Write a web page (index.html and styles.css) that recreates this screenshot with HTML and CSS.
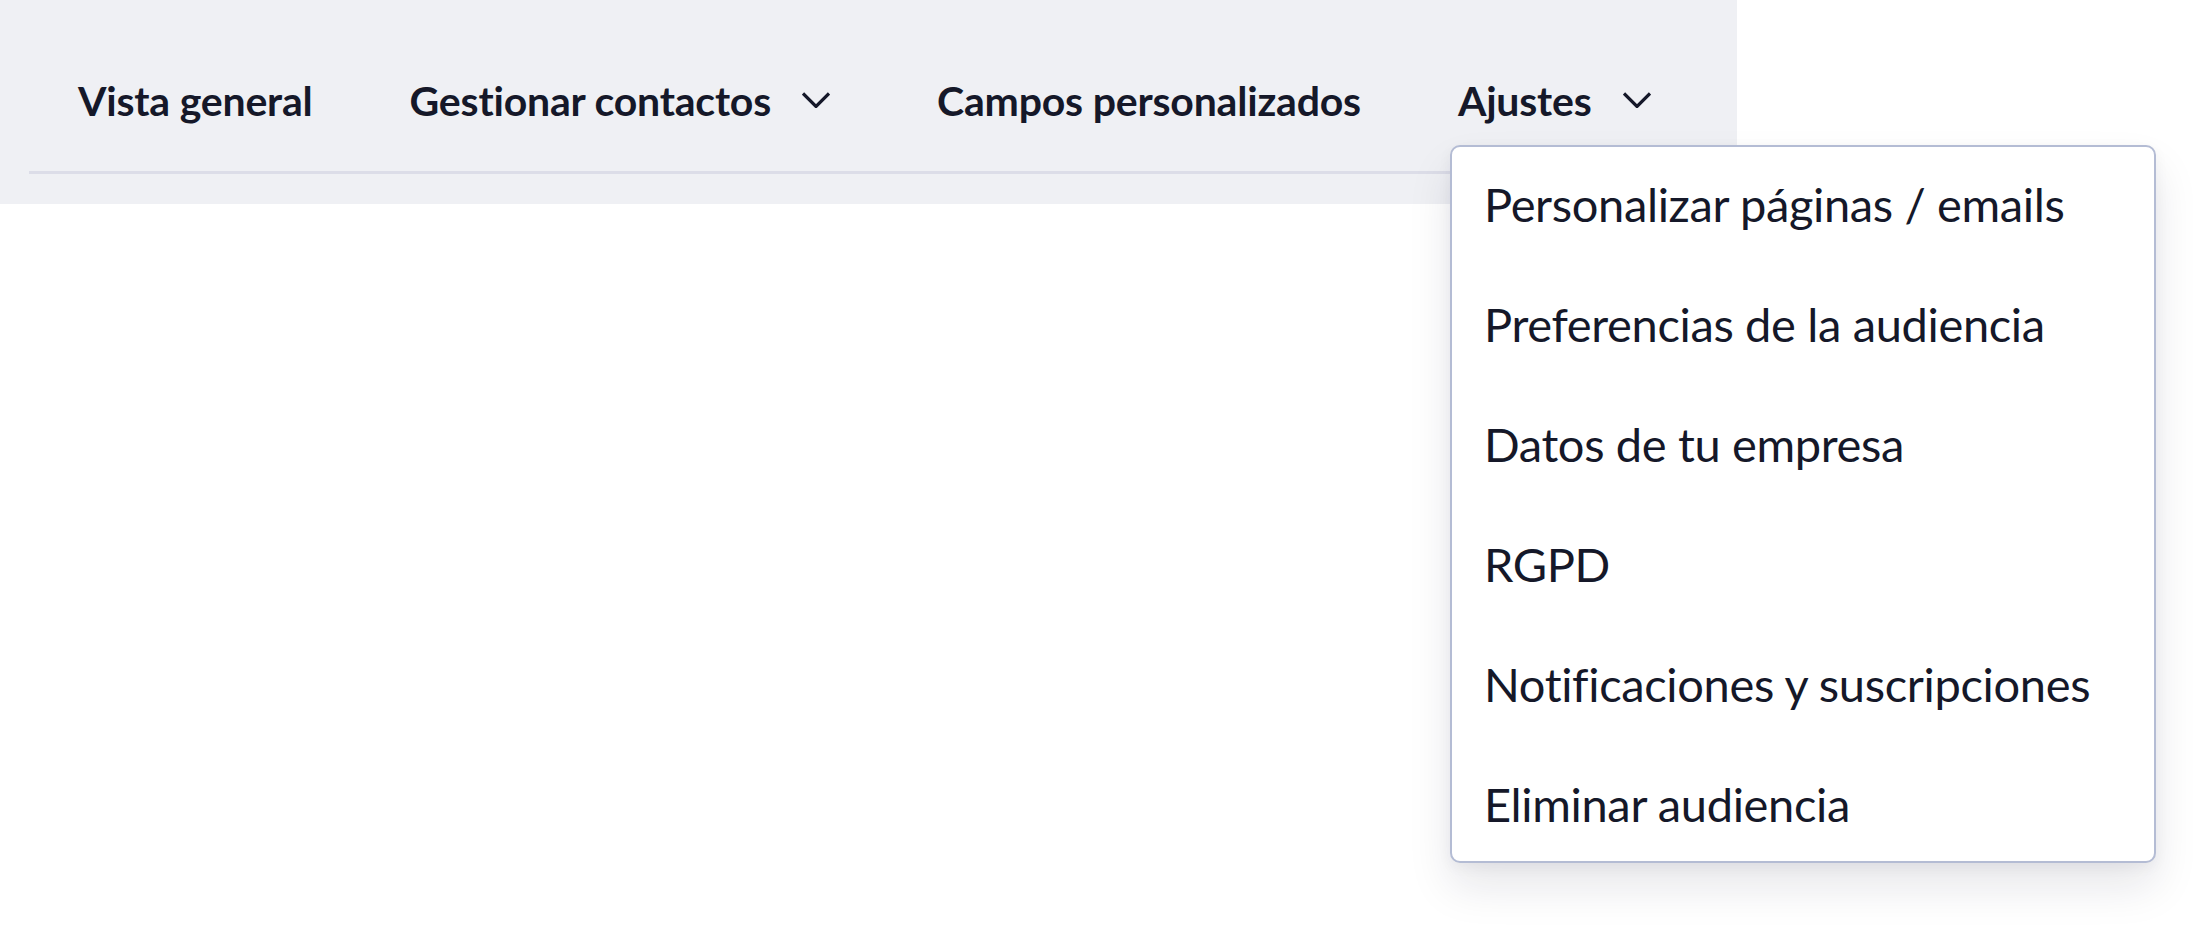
FILE: index.html
```html
<!DOCTYPE html>
<html lang="es">
<head>
<meta charset="utf-8">
<title>Audiencia</title>
<link rel="stylesheet" href="styles.css">
</head>
<body>
<div class="page">
  <header class="topbar">
    <nav class="nav">
      <a class="nav-item">Vista general</a>
      <a class="nav-item">Gestionar contactos
        <span class="chev"><svg viewBox="0 0 28 16" width="28" height="16"><path d="M1 1.5 L14 14.5 L27 1.5"/></svg></span>
      </a>
      <a class="nav-item">Campos personalizados</a>
      <a class="nav-item">Ajustes
        <span class="chev"><svg viewBox="0 0 28 16" width="28" height="16"><path d="M1 1.5 L14 14.5 L27 1.5"/></svg></span>
      </a>
    </nav>
  </header>
  <ul class="dropdown">
    <li class="dd-item">Personalizar páginas / emails</li>
    <li class="dd-item">Preferencias de la audiencia</li>
    <li class="dd-item">Datos de tu empresa</li>
    <li class="dd-item">RGPD</li>
    <li class="dd-item">Notificaciones y suscripciones</li>
    <li class="dd-item">Eliminar audiencia</li>
  </ul>
</div>
</body>
</html>
```
FILE: styles.css
```css
html, body {
  margin: 0;
  padding: 0;
  background: #ffffff;
}
body {
  font-family: Lato, "Open Sans", "Liberation Sans", sans-serif;
  color: #151829;
}
.page {
  position: relative;
  width: 2193px;
  height: 936px;
  overflow: hidden;
}
.topbar {
  box-sizing: border-box;
  width: 1737px;
  height: 204px;
  background: #eff0f4;
  padding: 76px 31px 0 29px;
}
.nav {
  display: flex;
  align-items: flex-start;
  height: 95px;
  border-bottom: 3px solid #dcdde8;
}
.nav-item {
  display: flex;
  align-items: center;
  padding: 0 49px 0 48px;
  font-size: 41px;
  line-height: 50px;
  font-weight: 700;
  letter-spacing: -0.2px;
  white-space: nowrap;
  cursor: pointer;
}
.nav-item:first-child {
  padding-left: 49px;
}
.chev {
  display: flex;
  align-items: center;
  justify-content: center;
  width: 48px;
  height: 50px;
  margin-left: 21px;
  margin-right: 0;
}
.chev svg {
  display: block;
  fill: none;
  stroke: #151829;
  stroke-width: 3.2;
  stroke-linejoin: miter;
  stroke-linecap: butt;
  margin-top: -2px;
}
.dropdown {
  position: absolute;
  left: 1450px;
  top: 145px;
  box-sizing: border-box;
  width: 706px;
  height: 718px;
  margin: 0;
  padding: 0;
  list-style: none;
  background: #ffffff;
  border: 2px solid #b4bcd4;
  border-radius: 10px;
  box-shadow: 0 24px 44px rgba(20, 24, 50, 0.1), 0 4px 14px rgba(20, 24, 50, 0.05);
}
.dd-item {
  box-sizing: border-box;
  display: flex;
  align-items: center;
  height: 120px;
  padding: 0 0 6px 32px;
  font-size: 47px;
  font-weight: 400;
  letter-spacing: -0.35px;
  white-space: nowrap;
}
```
